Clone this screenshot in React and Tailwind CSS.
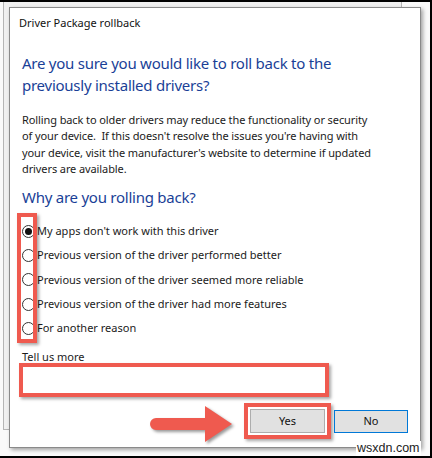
import React from "react";

const ui = { fontFamily: '"Noto Sans", "Open Sans", sans-serif' };

const reasons = [
  "My apps don't work with this driver",
  "Previous version of the driver performed better",
  "Previous version of the driver seemed more reliable",
  "Previous version of the driver had more features",
  "For another reason",
];

function Radio({ checked }) {
  return (
    <span className="flex h-[13px] w-[13px] shrink-0 items-center justify-center rounded-full border border-[#333] bg-white">
      {checked && <span className="h-[7px] w-[7px] rounded-full bg-[#111]" />}
    </span>
  );
}

export default function App() {
  return (
    <div
      className="relative h-[458px] w-[432px] overflow-hidden border-y-2 border-r-2 border-black bg-[#fafafa]"
      style={ui}
    >
      {/* window behind the dialog */}
      <div className="absolute left-[3px] top-0 h-[428px] w-[399px] border-x border-b border-[#b5b5b5] bg-[#f0f0f0]" />

      {/* dialog */}
      <div className="absolute left-[9px] top-[5px] flex h-[441px] w-[412px] flex-col border border-[#8a8a8a] bg-white text-[#111] shadow-[2px_2px_4px_rgba(0,0,0,0.35)]">
        <div className="ml-[9px] mt-[7px] text-[11px] leading-[16px]">Driver Package rollback</div>

        <div className="pl-[12px]">
          <h1 className="mt-[21px] text-[15px] leading-[22px] tracking-[-0.25px] text-[#1a3f97]">
            Are you sure you would like to roll back to the
            <br />
            previously installed drivers?
          </h1>

          <p className="mt-[16px] text-[11px] leading-[16.3px] tracking-[-0.1px] text-[#1b1b1b]">
            Rolling back to older drivers may reduce the functionality or security
            <br />
            of your device.&nbsp; If this doesn't resolve the issues you're having with
            <br />
            your device, visit the manufacturer's website to determine if updated
            <br />
            drivers are available.
          </p>

          <h2 className="mt-[9px] text-[15px] leading-[22px] tracking-[-0.25px] text-[#1a3f97]">
            Why are you rolling back?
          </h2>

          <div className="mt-[11px] flex flex-col">
            {reasons.map((r, i) => (
              <label key={r} className="flex h-[24.3px] items-center gap-[2px] text-[11px] text-[#1b1b1b]">
                <Radio checked={i === 0} />
                <span>{r}</span>
              </label>
            ))}
          </div>

          <div className="mt-[9.5px] text-[11px] leading-[14px] text-[#1b1b1b]">Tell us more</div>

          <div className="-ml-[3px] -mt-[1px] h-[34px] w-[310px] border-4 border-[#ef5a4f] bg-white shadow-[2px_2px_3px_rgba(0,0,0,0.35)]" />
        </div>

        <div className="mr-[12px] mt-[6px] flex items-center justify-end gap-[3px]">
          <div className="border-4 border-[#ef5a4f] bg-white p-[2px] shadow-[2px_2px_3px_rgba(0,0,0,0.35)]">
            <button className="flex h-[24px] w-[75px] items-center justify-center border border-[#adadad] bg-[#e1e1e1] text-[11px] text-[#111]">
              Yes
            </button>
          </div>
          <button className="flex h-[23px] w-[74px] items-center justify-center border border-[#0078d7] bg-[#e1e1e1] text-[11px] text-[#111]">
            No
          </button>
        </div>
      </div>

      {/* red annotation around the radio buttons */}
      <div className="absolute left-[17px] top-[211px] h-[130px] w-[20px] border-4 border-[#ef5a4f] shadow-[2px_2px_3px_rgba(0,0,0,0.35)]" />

      {/* arrow pointing at Yes */}
      <svg
        className="absolute left-[146px] top-[400px] drop-shadow-[2px_2px_1.5px_rgba(0,0,0,0.4)]"
        width="90"
        height="44"
        viewBox="0 0 90 44"
      >
        <path d="M10 16 H59 V4 L86 22 L59 40 V28 H10 A6 6 0 0 1 10 16 Z" fill="#ef5a4f" />
      </svg>

      <div
        className="absolute left-[356px] top-[439px] bg-white px-[1px] text-[12.5px] leading-[15px] text-[#222]"
        style={{ fontFamily: '"Liberation Sans", Arial, sans-serif' }}
      >
        wsxdn.com
      </div>
    </div>
  );
}
